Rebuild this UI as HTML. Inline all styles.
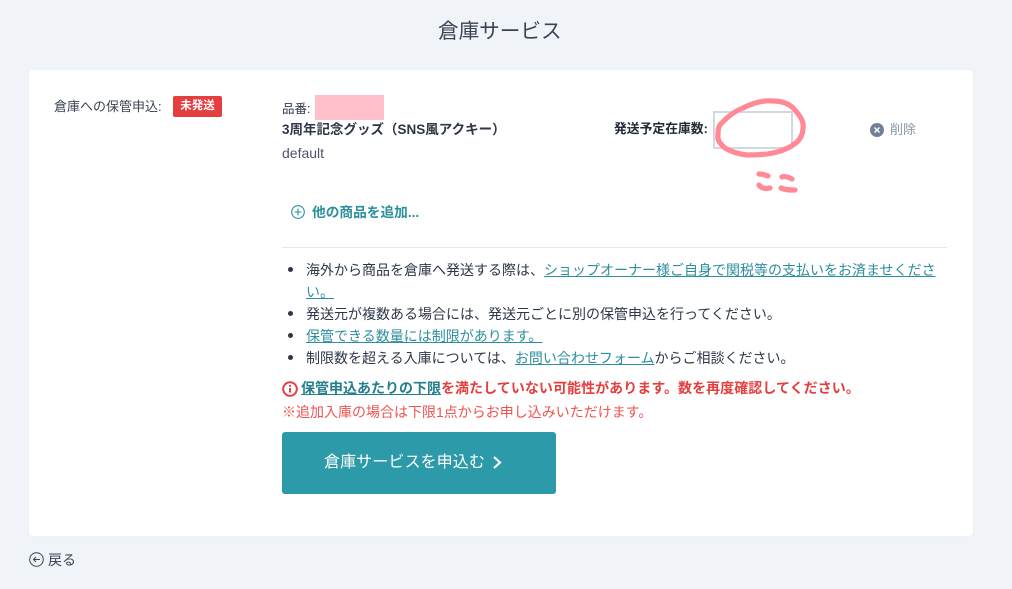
<!DOCTYPE html>
<html lang="ja"><head><meta charset="utf-8"><style>
html,body{margin:0;padding:0}
body{width:1012px;height:589px;background:#f0f3f8;position:relative;overflow:hidden;font-family:"Liberation Sans","Noto Sans CJK JP",sans-serif;color:#2d3748;font-size:14px}
.t{position:absolute;white-space:nowrap;line-height:20px}
a{color:#2c8f9e;text-decoration:underline}
b{font-weight:700}
.dot{position:absolute;left:288px;width:5px;height:5px;border-radius:50%;background:#2d3748}
</style></head><body>
<div class="t" style="left:438px;top:19px;font-size:20.6px;line-height:26px;color:#3a4452">倉庫サービス</div>
<div style="position:absolute;left:29px;top:70px;width:944px;height:466px;background:#fff;border-radius:4px;box-shadow:0 0 1px #e2e6ec"></div>
<div class="t" style="left:54px;top:97px;font-size:13px;color:#3a4452">倉庫への保管申込:</div>
<div style="position:absolute;left:173px;top:96px;width:49px;height:21px;line-height:21px;background:#e53e3e;border-radius:2px;color:#fff;font-size:11.5px;font-weight:700;text-align:center">未発送</div>
<div class="t" style="left:282px;top:99px;font-size:12.5px">品番:</div>
<div style="position:absolute;left:315px;top:95px;width:69px;height:25px;background:#ffc0cb"></div>
<div class="t" style="left:282px;top:120px;font-size:13.5px;font-weight:700">3周年記念グッズ（SNS風アクキー）</div>
<div class="t" style="left:282px;top:143px;font-size:14px;color:#4a5568">default</div>
<div class="t" style="left:614px;top:119px;font-size:12.8px;font-weight:700;color:#1f2937">発送予定在庫数:</div>
<div style="position:absolute;left:713px;top:111px;width:76px;height:34px;border:2px solid #d2d8e2"></div>
<svg style="position:absolute;left:700px;top:90px" width="120" height="110" viewBox="0 0 120 110" fill="none" stroke="#ff8a96" stroke-linecap="round">
<path stroke-width="5.200" d="M20 35C27 27 35 21 43 18C53 13 63 10 73 11C83 11 90 14 95 20C101 27 104 32 103 38C103 44 101 48 97 52C90 58 82 61 73 63C64 65 55 65 47 65C38 64 30 61 25 58C20 54 17 50 18 45C18 41 18 38 20 35Z"/>
<path stroke-width="5.200" d="M59 84C62 84 66 85 68 86M59 95C61 98 65 99 70 98M82 87C84 86 89 87 92 89M81 98C85 100 90 100 95 100"/>
</svg>
<svg style="position:absolute;left:870px;top:123px" width="14" height="14" viewBox="0 0 14 14"><circle cx="7" cy="7" r="7" fill="#718096"/><path d="M4.5 4.5l5 5M9.500 4.500l-5 5" stroke="#fff" stroke-width="1.400"/></svg>
<div class="t" style="left:890px;top:120px;font-size:13px;color:#8a97a8">削除</div>
<svg style="position:absolute;left:291px;top:205px" width="14" height="14" viewBox="0 0 14 14" fill="none" stroke="#2c8f9e" stroke-width="1.100"><circle cx="7" cy="7" r="6.300"/><path d="M7 3.500v7M3.500 7h7"/></svg>
<div class="t" style="left:312px;top:203px;font-size:13.7px;font-weight:700;color:#2c8f9e">他の商品を追加...</div>
<div style="position:absolute;left:282px;top:247px;width:665px;height:1px;background:#e2e8f0"></div>
<div class="dot" style="top:267px"></div>
<div class="t" style="left:306px;top:260px;font-size:14px">海外から商品を倉庫へ発送する際は、<a href="#">ショップオーナー様ご自身で関税等の支払いをお済ませくださ</a></div>
<div class="t" style="left:306px;top:282px;font-size:14px"><a href="#">い。</a></div>
<div class="dot" style="top:311px"></div>
<div class="t" style="left:306px;top:304px;font-size:14px">発送元が複数ある場合には、発送元ごとに別の保管申込を行ってください。</div>
<div class="dot" style="top:333px"></div>
<div class="t" style="left:306px;top:326px;font-size:14px"><a href="#">保管できる数量には制限があります。</a></div>
<div class="dot" style="top:355px"></div>
<div class="t" style="left:306px;top:348px;font-size:14px">制限数を超える入庫については、<a href="#">お問い合わせフォーム</a>からご相談ください。</div>
<svg style="position:absolute;left:282px;top:381px" width="16" height="16" viewBox="0 0 16 16" fill="none" stroke="#e53e3e" stroke-width="2"><circle cx="8" cy="8" r="6.800"/><path d="M8 7v4.500M8 4v1.800"/></svg>
<div class="t" style="left:301px;top:378px;font-size:14px;font-weight:700;color:#e53e3e"><a href="#" style="color:#237f8c">保管申込あたりの下限</a><span style="letter-spacing:.05px">を満たしていない可能性があります。数を再度確認してください。</span></div>
<div class="t" style="left:282px;top:402px;font-size:14px;color:#ef5350">※追加入庫の場合は下限1点からお申し込みいただけます。</div>
<div style="position:absolute;left:282px;top:432px;width:274px;height:62px;background:#2c9aa8;border-radius:3px"></div>
<div class="t" style="left:324px;top:452px;font-size:16.1px;color:#fff">倉庫サービスを申込む</div>
<svg style="position:absolute;left:491px;top:455px" width="12" height="15" viewBox="0 0 12 15" fill="none" stroke="#fff" stroke-width="2.200"><path d="M3 2l6 5.500-6 5.500"/></svg>
<svg style="position:absolute;left:29px;top:552px" width="15" height="15" viewBox="0 0 15 15" fill="none" stroke="#3a4452" stroke-width="1"><circle cx="7.500" cy="7.500" r="6.800"/><path d="M11 7.500H4.500M7 5L4.500 7.500 7 10"/></svg>
<div class="t" style="left:48px;top:550px;font-size:14px;color:#3a4452">戻る</div>
</body></html>
